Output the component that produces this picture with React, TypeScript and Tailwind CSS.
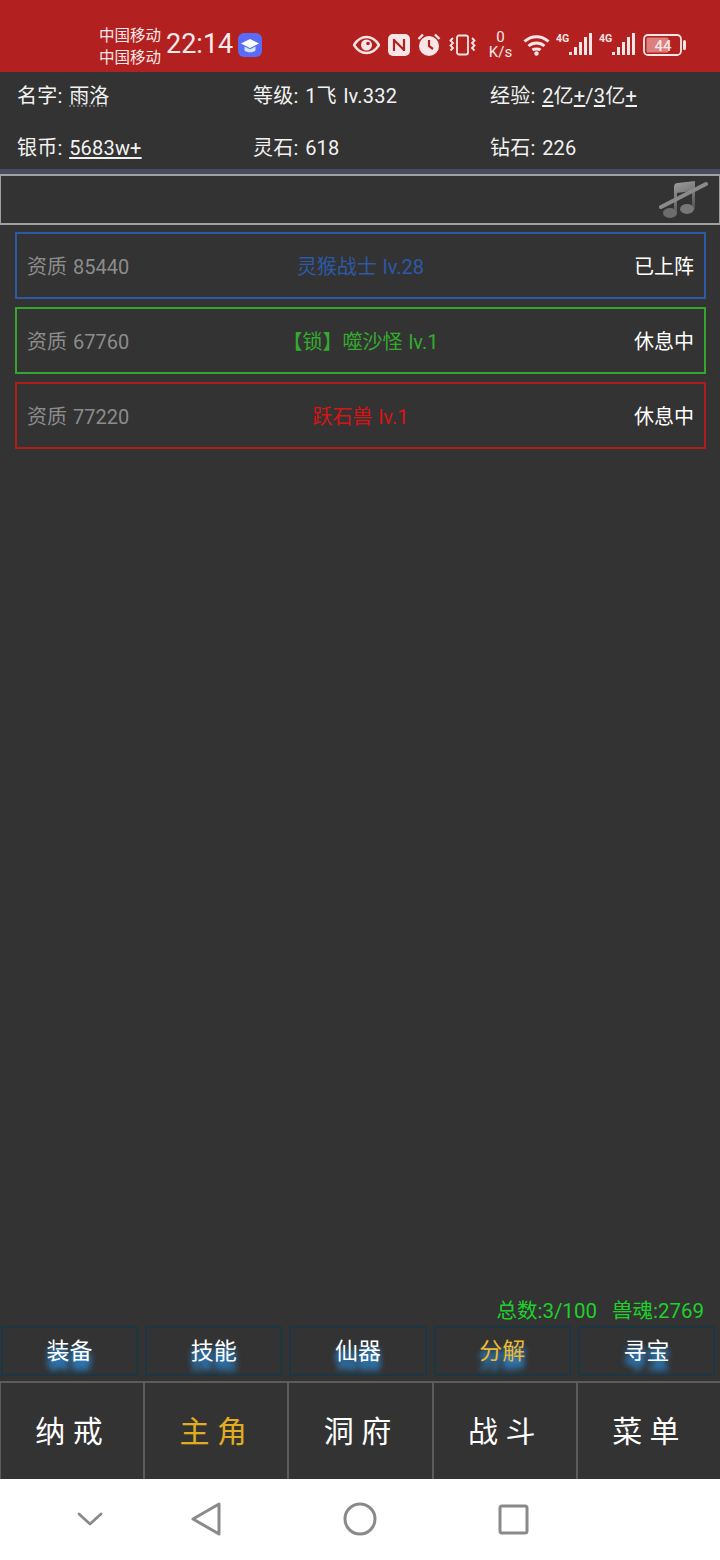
import type { ReactNode } from "react";

const FONT = "font-['Roboto','Noto_Sans_CJK_SC',sans-serif]";

const pets = [
  { score: "资质 85440", name: "灵猴战士 lv.28", state: "已上阵", box: "border-[#2c5aa6]", text: "text-[#2c5aa6]" },
  { score: "资质 67760", name: "【锁】噬沙怪 lv.1", state: "休息中", box: "border-[#34a52e]", text: "text-[#34ab2e]" },
  { score: "资质 77220", name: "跃石兽 lv.1", state: "休息中", box: "border-[#b01c1c]", text: "text-[#d81414]" },
];

const subTabs = ["装备", "技能", "仙器", "分解", "寻宝"];
const mainTabs = ["纳 戒", "主 角", "洞 府", "战 斗", "菜 单"];

function Signal() {
  return (
    <svg width="36" height="24" viewBox="0 0 36 24" fill="#f8e6e6">
      <text x="0" y="9" fontSize="10.500" fontWeight="700" fontFamily="Roboto, sans-serif">4G</text>
      <rect x="13" y="19" width="3" height="3" />
      <rect x="18" y="14" width="3" height="8" />
      <rect x="23" y="9" width="3" height="13" />
      <rect x="28" y="4" width="3" height="18" />
      <rect x="33" y="0" width="3" height="22" />
    </svg>
  );
}

function StatusBar() {
  return (
    <div className="flex h-[72px] shrink-0 items-center bg-[#b32020] pl-[99px] pt-[17px] text-[#fbeaea]">
      <div className="w-[67px] font-['Noto_Sans_CJK_SC',sans-serif] text-[15.500px] leading-[22px]">
        <div>中国移动</div>
        <div>中国移动</div>
      </div>
      <span className="w-[72px] font-['Roboto',sans-serif] text-[27px] leading-none">22:14</span>
      <svg width="24" height="24" viewBox="0 0 24 24" className="shrink-0">
        <rect width="24" height="24" rx="6" fill="#5a6cf5" />
        <path d="M12 6 21 10.500 12 15 3 10.500Z" fill="#fff" />
        <path d="M6.500 13.500v4c2 2.400 9 2.400 11 0v-4L12 16.300Z" fill="#cfe6fb" />
      </svg>
      {/* right hand status icons */}
      <svg width="27" height="20" viewBox="0 0 27 20" className="ml-[91px] shrink-0">
        <path d="M1 10C5 3.500 9 2 13.500 2S22 3.500 26 10C22 16.500 18 18 13.500 18S5 16.500 1 10Z" fill="none" stroke="#f8e6e6" strokeWidth="2.400" />
        <circle cx="13.500" cy="10" r="5.500" fill="#f8e6e6" />
        <circle cx="15" cy="8.500" r="1.800" fill="#b32020" />
      </svg>
      <svg width="22" height="22" viewBox="0 0 22 22" className="ml-[8px] shrink-0">
        <rect width="22" height="22" rx="5" fill="#f8e6e6" />
        <path d="M6 5v12M6 6l10 10M16 5v12" fill="none" stroke="#b32020" strokeWidth="2.200" />
      </svg>
      <svg width="24" height="24" viewBox="0 0 24 24" className="ml-[7px] shrink-0">
        <circle cx="12" cy="13" r="10" fill="#f8e6e6" />
        <path d="M12 7v6l4 3" fill="none" stroke="#b32020" strokeWidth="2.200" />
        <path d="M1.500 6 6 1.500M22.500 6 18 1.500" stroke="#f8e6e6" strokeWidth="2.400" />
      </svg>
      <svg width="27" height="22" viewBox="0 0 27 22" className="ml-[8px] shrink-0" fill="none" stroke="#f8e6e6" strokeWidth="1.800">
        <rect x="8" y="1.500" width="11" height="19" rx="2" />
        <path d="M4 4 1.500 6.500 4 9 1.500 11.500 4 14 1.500 16.500M23 4l2.500 2.500L23 9l2.500 2.500L23 14l2.500 2.500" />
      </svg>
      <div className="ml-[12px] flex w-[25px] shrink-0 flex-col items-center font-['Roboto',sans-serif] text-[15px] leading-[15px]">
        <span>0</span>
        <span>K/s</span>
      </div>
      <svg width="28" height="22" viewBox="0 0 28 22" className="ml-[10px] shrink-0" fill="none" stroke="#f8e6e6" strokeWidth="3">
        <path d="M1.500 7.500C8.500 1 18.500 1 25.500 7.500M5.500 12C10 8 17 8 21.500 12M9.500 16C11.500 14.500 15.500 14.500 17.500 16" />
        <circle cx="13.500" cy="19.500" r="2.200" fill="#f8e6e6" stroke="none" />
      </svg>
      <div className="ml-[5px] shrink-0"><Signal /></div>
      <div className="ml-[7px] shrink-0"><Signal /></div>
      <svg width="43" height="22" viewBox="0 0 43 22" className="ml-[8px] shrink-0">
        <rect x="1" y="1" width="37" height="20" rx="4" fill="none" stroke="#f8e6e6" strokeWidth="1.800" />
        <rect x="3.500" y="3.500" width="22" height="15" rx="1.500" fill="#dc7f7f" />
        <rect x="40" y="6" width="3" height="10" rx="1.500" fill="#f8e6e6" />
        <text x="20" y="16.500" textAnchor="middle" fontSize="15" fontWeight="500" fill="#f8e6e6" fontFamily="Roboto, sans-serif">44</text>
      </svg>
    </div>
  );
}

function Stat({ label, children }: { label: string; children: ReactNode }) {
  return (
    <div className="text-[20px] leading-[28px] tracking-[0.2px] text-[#f2f2f2] [word-spacing:1.500px]">
      {label}: {children}
    </div>
  );
}

// the game's underline only shows under latin glyphs, the CJK ones break it
function Linked({ children }: { children: ReactNode }) {
  return <span className="underline underline-offset-2">{children}</span>;
}

function MutedNote() {
  return (
    <svg width="50" height="40" viewBox="0 0 50 40">
      <defs>
        <linearGradient id="note" x1="0" y1="0" x2="0.300" y2="1">
          <stop offset="0" stopColor="#a0a0a0" />
          <stop offset="1" stopColor="#555" />
        </linearGradient>
      </defs>
      <g className="blur-[0.5px]">
        <path d="M15 7Q15 3 19 3L36 1V29H33V11L18 13V34H15Z" fill="url(#note)" />
        <ellipse cx="11" cy="33" rx="7" ry="5" fill="#6c6c6c" />
        <ellipse cx="28" cy="29" rx="7" ry="5" fill="#777" />
        <path d="M2 27 47 4" stroke="#8a8a8a" strokeWidth="4" strokeLinecap="round" />
      </g>
    </svg>
  );
}

export default function App() {
  return (
    <div className={`${FONT} flex h-[1560px] w-[720px] flex-col overflow-hidden bg-[#333333]`}>
      <StatusBar />

      <div className="grid h-[97px] shrink-0 grid-cols-[236px_237px_1fr] grid-rows-[52px_35px] items-start pl-[17px] pt-[10px]">
        <Stat label="名字">
          <span className="underline decoration-white/30 decoration-dotted underline-offset-2">雨洛</span>
        </Stat>
        <Stat label="等级">1飞 lv.332</Stat>
        <Stat label="经验">
          <Linked>2</Linked>亿<Linked>+</Linked>/<Linked>3</Linked>亿<Linked>+</Linked>
        </Stat>
        <Stat label="银币"><Linked>5683w+</Linked></Stat>
        <Stat label="灵石">618</Stat>
        <Stat label="钻石">226</Stat>
      </div>

      <div className="h-[5px] shrink-0 bg-[#4b4b60]" />
      <div className="flex h-[51px] shrink-0 items-center justify-end border-x border-y-2 border-[#a0a0a0] pr-[10px] pt-[1px]">
        <MutedNote />
      </div>

      <div className="flex flex-col gap-[8px] pl-[15px] pr-[14px] pt-[7px]">
        {pets.map((pet) => (
          <div
            key={pet.score}
            className={`grid h-[67px] grid-cols-[1fr_auto_1fr] items-center border-2 px-[10px] pt-[2px] text-[20px] [word-spacing:1px] ${pet.box}`}
          >
            <span className="text-[#8c8c8c]">{pet.score}</span>
            <span className={pet.text}>{pet.name}</span>
            <span className="text-right text-white">{pet.state}</span>
          </div>
        ))}
      </div>

      <div className="mt-auto flex justify-end gap-[15px] pb-[2px] pr-[16px] text-[20.500px] leading-[26px] text-[#1fd02b]">
        <span>总数:3/100</span>
        <span>兽魂:2769</span>
      </div>

      <div className="grid h-[50px] shrink-0 grid-cols-5 gap-[7px] pl-[1px] pr-[5px]">
        {subTabs.map((tab) => (
          <div
            key={tab}
            className={`flex items-center justify-center border-2 border-[#1d3644] pt-[2px] text-[23px] [text-shadow:0_8px_6px_#2b86d0,0_8px_6px_#2b86d0] ${
              tab === "分解" ? "text-[#efb92f]" : "text-white"
            }`}
          >
            {tab}
          </div>
        ))}
      </div>

      <div className="mt-[5px] -ml-[1px] grid h-[98px] w-[721px] shrink-0 grid-cols-5 border-t-2 border-[#5c5c5c]">
        {mainTabs.map((tab) => (
          <div
            key={tab}
            className={`flex items-center justify-center border-l-2 border-[#5c5c5c] pr-[6px] text-[30px] ${
              tab === "主 角" ? "text-[#e0ad1f]" : "text-white"
            }`}
          >
            {tab}
          </div>
        ))}
      </div>

      <div className="flex h-[81px] shrink-0 items-center bg-white pb-[1px] pl-[77px]">
        <svg width="26" height="15" viewBox="0 0 26 15" fill="none" stroke="#8a8a8a" strokeWidth="2.800" strokeLinecap="round" strokeLinejoin="round">
          <path d="M2 2 13 12 24 2" />
        </svg>
        <svg width="30" height="34" viewBox="0 0 30 34" fill="none" stroke="#8a8a8a" strokeWidth="3" strokeLinejoin="round" className="ml-[88px]">
          <path d="M28 2V32L2 17Z" />
        </svg>
        <svg width="34" height="34" viewBox="0 0 34 34" fill="none" stroke="#8a8a8a" strokeWidth="3" className="ml-[122px]">
          <circle cx="17" cy="17" r="15" />
        </svg>
        <svg width="31" height="31" viewBox="0 0 31 31" fill="none" stroke="#8a8a8a" strokeWidth="3" strokeLinejoin="round" className="ml-[121px]">
          <rect x="2" y="2" width="27" height="27" rx="2" />
        </svg>
      </div>
    </div>
  );
}
